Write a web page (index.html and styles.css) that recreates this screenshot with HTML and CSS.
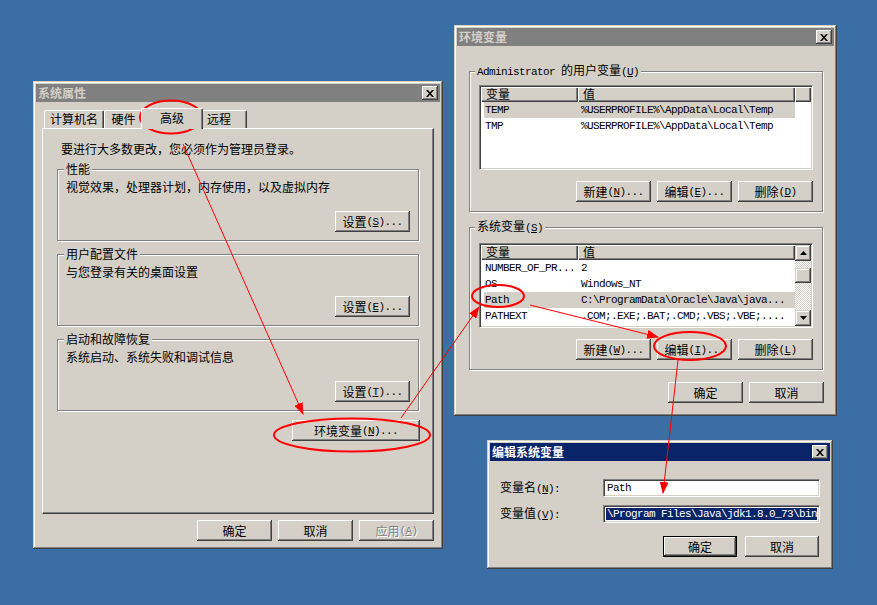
FILE: index.html
```html
<!DOCTYPE html>
<html lang="zh-CN">
<head>
<meta charset="utf-8">
<title>系统属性 - 环境变量</title>
<link rel="stylesheet" href="styles.css">
</head>
<body>
<div class="desktop">

  <section class="win win-sys">
    <header class="titlebar inactive">
      <span class="title">系统属性</span>
      <span class="close"><svg width="8" height="7" viewBox="0 0 8 7"><path d="M0 0h2l6 7H6zM6 0h2L2 7H0z"/></svg></span>
    </header>
    <div class="sys-body">
      <div class="tabs">
        <span class="tab t1">计算机名</span>
        <span class="tab t2">硬件</span>
        <span class="tab t3 sel">高级</span>
        <span class="tab t4">远程</span>
      </div>
      <div class="tabpanel">
        <p class="note">要进行大多数更改，您必须作为管理员登录。</p>
        <fieldset class="group sys-group">
          <legend>性能</legend>
          <p class="desc">视觉效果，处理器计划，内存使用，以及虚拟内存</p>
          <div class="row-end"><button class="btn">设置<span class="m">(<u>S</u>)...</span></button></div>
        </fieldset>
        <fieldset class="group sys-group">
          <legend>用户配置文件</legend>
          <p class="desc">与您登录有关的桌面设置</p>
          <div class="row-end"><button class="btn">设置<span class="m">(<u>E</u>)...</span></button></div>
        </fieldset>
        <fieldset class="group sys-group">
          <legend>启动和故障恢复</legend>
          <p class="desc">系统启动、系统失败和调试信息</p>
          <div class="row-end"><button class="btn">设置<span class="m">(<u>T</u>)...</span></button></div>
        </fieldset>
        <div class="row-end env-row"><button class="btn btn-wide">环境变量<span class="m">(<u>N</u>)...</span></button></div>
      </div>
      <div class="row-end dlg-buttons">
        <button class="btn">确定</button>
        <button class="btn">取消</button>
        <button class="btn" disabled>应用<span class="m">(<u>A</u>)</span></button>
      </div>
    </div>
  </section>

  <section class="win win-env">
    <header class="titlebar inactive">
      <span class="title">环境变量</span>
      <span class="close"><svg width="8" height="7" viewBox="0 0 8 7"><path d="M0 0h2l6 7H6zM6 0h2L2 7H0z"/></svg></span>
    </header>
    <div class="env-body">
      <fieldset class="group env-group">
        <legend><span class="m">Administrator </span>的用户变量<span class="m">(<u>U</u>)</span></legend>
        <div class="lv">
          <div class="lv-head"><span class="hc c1">变量</span><span class="hc c2">值</span><span class="hc c3"></span></div>
          <div class="lv-row sel"><span class="c1">TEMP</span><span class="c2">%USERPROFILE%\AppData\Local\Temp</span></div>
          <div class="lv-row"><span class="c1">TMP</span><span class="c2">%USERPROFILE%\AppData\Local\Temp</span></div>
        </div>
        <div class="row-end btn-row">
          <button class="btn">新建<span class="m">(<u>N</u>)...</span></button>
          <button class="btn">编辑<span class="m">(<u>E</u>)...</span></button>
          <button class="btn">删除<span class="m">(<u>D</u>)</span></button>
        </div>
      </fieldset>
      <fieldset class="group env-group sysvars">
        <legend>系统变量<span class="m">(<u>S</u>)</span></legend>
        <div class="lv lv-scroll">
          <div class="lv-main">
            <div class="lv-head"><span class="hc c1">变量</span><span class="hc c2">值</span></div>
            <div class="lv-row"><span class="c1">NUMBER_OF_PR...</span><span class="c2">2</span></div>
            <div class="lv-row"><span class="c1">OS</span><span class="c2">Windows_NT</span></div>
            <div class="lv-row sel"><span class="c1">Path</span><span class="c2">C:\ProgramData\Oracle\Java\java...</span></div>
            <div class="lv-row"><span class="c1">PATHEXT</span><span class="c2">.COM;.EXE;.BAT;.CMD;.VBS;.VBE;....</span></div>
          </div>
          <div class="vscroll">
            <span class="sb-btn"><svg width="7" height="4" viewBox="0 0 7 4"><path d="M3.5 0L7 4H0z"/></svg></span>
            <span class="sb-track"><span class="sb-thumb"></span></span>
            <span class="sb-btn"><svg width="7" height="4" viewBox="0 0 7 4"><path d="M0 0h7L3.5 4z"/></svg></span>
          </div>
        </div>
        <div class="row-end btn-row">
          <button class="btn">新建<span class="m">(<u>W</u>)...</span></button>
          <button class="btn">编辑<span class="m">(<u>I</u>)...</span></button>
          <button class="btn">删除<span class="m">(<u>L</u>)</span></button>
        </div>
      </fieldset>
      <div class="row-end env-buttons">
        <button class="btn">确定</button>
        <button class="btn">取消</button>
      </div>
    </div>
  </section>

  <section class="win win-edit">
    <header class="titlebar active">
      <span class="title">编辑系统变量</span>
      <span class="close"><svg width="8" height="7" viewBox="0 0 8 7"><path d="M0 0h2l6 7H6zM6 0h2L2 7H0z"/></svg></span>
    </header>
    <div class="edit-body">
      <div class="form">
        <label class="lbl">变量名<span class="m">(<u>N</u>):</span></label>
        <div class="field"><span class="m fv">Path</span></div>
        <label class="lbl">变量值<span class="m">(<u>V</u>):</span></label>
        <div class="field"><span class="m fv selected">\Program Files\Java\jdk1.8.0_73\bin</span></div>
      </div>
      <div class="row-end edit-buttons">
        <button class="btn btn-s default">确定</button>
        <button class="btn btn-s">取消</button>
      </div>
    </div>
  </section>

  <svg class="annot" width="877" height="605" viewBox="0 0 877 605">
    <defs>
      <marker id="ah" markerWidth="12" markerHeight="9" refX="11" refY="4.5" orient="auto" markerUnits="userSpaceOnUse">
        <path d="M0 0L12 4.5L0 9z" fill="#f00"/>
      </marker>
    </defs>
    <g fill="none" stroke="#f00">
      <ellipse cx="171" cy="117" rx="31" ry="16.5" stroke-width="2"/>
      <ellipse cx="352" cy="435" rx="78" ry="16.5" stroke-width="2"/>
      <ellipse cx="498" cy="296" rx="26" ry="11" stroke-width="2"/>
      <ellipse cx="690" cy="346" rx="36" ry="14" stroke-width="2"/>
      <line x1="183" y1="144" x2="303" y2="414" marker-end="url(#ah)"/>
      <line x1="401" y1="418" x2="479" y2="307" marker-end="url(#ah)"/>
      <line x1="530" y1="305" x2="658" y2="337" marker-end="url(#ah)"/>
      <line x1="678" y1="360" x2="663" y2="493" marker-end="url(#ah)"/>
    </g>
  </svg>

</div>
</body>
</html>
```

FILE: styles.css
```css
* { box-sizing: border-box; }

html, body { margin: 0; padding: 0; }

body {
  background: #3a6ea5;
  font: 12px/14px "Noto Sans CJK SC", sans-serif;
  color: #000;
}

p { margin: 0; }

.desktop {
  position: relative;
  width: 877px;
  height: 605px;
  overflow: hidden;
}

/* latin text in the dialogs: fixed 6px cells like the system font */
.m {
  font-family: "Liberation Mono", monospace;
  font-size: 11px;
  letter-spacing: -0.6px;
}

u { text-decoration: underline; text-underline-offset: 1px; }

/* ---------- windows ---------- */
.win {
  position: absolute;
  background: #d4d0c8;
  padding: 3px;
  display: flex;
  flex-direction: column;
  box-shadow:
    inset -1px -1px #404040,
    inset 1px 1px #d4d0c8,
    inset -2px -2px #808080,
    inset 2px 2px #fff;
}

.win-sys  { left: 33px;  top: 81px;  width: 410px; height: 468px; }
.win-env  { left: 454px; top: 25px;  width: 383px; height: 391px; }
.win-edit { left: 487px; top: 440px; width: 346px; height: 129px; }

.titlebar {
  flex: none;
  height: 18px;
  display: flex;
  align-items: center;
  justify-content: space-between;
  padding: 0 2px 0 2px;
  font-weight: bold;
}

.titlebar.inactive { background: #808080; color: #d4d0c8; }
.titlebar.active   { background: #0a246a; color: #fff; }

.close {
  width: 16px;
  height: 14px;
  display: flex;
  align-items: center;
  justify-content: center;
  background: #d4d0c8;
  box-shadow:
    inset -1px -1px #404040,
    inset 1px 1px #fff,
    inset -2px -2px #808080;
}

/* ---------- buttons ---------- */
.btn {
  width: 75px;
  height: 21px;
  padding: 0;
  border: 0;
  background: #d4d0c8;
  font: inherit;
  color: #000;
  display: inline-flex;
  align-items: center;
  justify-content: center;
  white-space: nowrap;
  box-shadow:
    inset -1px -1px #404040,
    inset 1px 1px #fff,
    inset -2px -2px #808080,
    inset 2px 2px #d4d0c8;
}

.btn:disabled { color: #808080; text-shadow: 1px 1px #fff; }

.btn-wide { width: 128px; }
.btn-s { width: 74px; }

.btn.default {
  box-shadow:
    inset 0 0 0 1px #000,
    inset -2px -2px #404040,
    inset 2px 2px #fff,
    inset -3px -3px #808080;
}

.row-end {
  display: flex;
  justify-content: flex-end;
  gap: 6px;
}

/* ---------- group boxes ---------- */
.group {
  margin: 0;
  min-width: 0;
  border: 1px solid #808080;
  box-shadow: inset 1px 1px #fff, 1px 1px #fff;
}

.group legend {
  padding: 0 2px;
  background: #d4d0c8;
  line-height: 14px;
}

/* ---------- 系统属性 ---------- */
.sys-body {
  flex: 1;
  display: flex;
  flex-direction: column;
  padding: 6px 6px 5px;
}

.tabs {
  display: flex;
  align-items: flex-end;
  height: 20px;
  padding-left: 2px;
}

.tab {
  position: relative;
  height: 18px;
  padding-top: 1px;
  text-align: center;
  background: #d4d0c8;
  border-left: 1px solid #fff;
  border-top: 1px solid #fff;
  border-right: 1px solid #404040;
  border-radius: 2px 2px 0 0;
  box-shadow: inset -1px 0 #808080;
}

.t1 { width: 60px; }
.t2 { width: 39px; }
.t3 { width: 62px; }
.t4 { width: 46px; padding-right: 10px; }

.tab.sel {
  z-index: 1;
  height: 21px;
  margin: 0 -2px -1px;
  padding-top: 2px;
}

.tabpanel {
  flex: 1;
  padding: 13px 14px 0;
  border-top: 1px solid #fff;
  border-left: 1px solid #fff;
  border-right: 1px solid #404040;
  border-bottom: 1px solid #404040;
  box-shadow: inset -1px -1px #808080;
}

.note { margin-left: 4px; }

.sys-group {
  margin-top: 6px;
  padding: 4px 8px 8px 6px;
}

.desc { margin-left: 2px; margin-bottom: 17px; }

.env-row { margin-top: 9px; margin-right: -1px; }

.dlg-buttons { margin-top: 6px; }

/* ---------- 环境变量 ---------- */
.env-body {
  flex: 1;
  padding: 17px 11px 0 12px;
}

.env-group { padding: 6px 9px 9px 9px; }
.env-group legend { margin-left: -4px; }

.env-group.sysvars { margin-top: 7px; padding-top: 8px; }

.lv {
  height: 85px;
  padding: 1px;
  background: #fff;
  border: 1px solid;
  border-color: #808080 #fff #fff #808080;
  box-shadow: inset 1px 1px #404040, inset -1px -1px #d4d0c8;
  overflow: hidden;
}

.lv-head { display: flex; height: 15px; }

.hc {
  height: 15px;
  padding-left: 5px;
  line-height: 14px;
  background: #d4d0c8;
  box-shadow:
    inset 1px 1px #fff,
    inset -1px -1px #404040,
    inset -2px -2px #808080;
}

.hc.c1 { width: 97px; }
.hc.c2 { width: 217px; }
.hc.c3 { flex: 1; }

.lv-row {
  display: flex;
  width: 311px;
  height: 16px;
  margin-left: 3px;
  font-family: "Liberation Mono", monospace;
  font-size: 11px;
  letter-spacing: -0.6px;
  line-height: 16px;
  white-space: nowrap;
}

.lv-row.sel { background: #d4d0c8; }

.lv-row .c1 { width: 94px; padding-left: 1px; }
.lv-row .c2 { padding-left: 3px; }

.lv-scroll { display: flex; }
.lv-main { flex: 1; min-width: 0; }

.vscroll {
  width: 16px;
  display: flex;
  flex-direction: column;
  background: repeating-conic-gradient(#fff 0 25%, #d4d0c8 0 50%) 0 0 / 2px 2px;
}

.sb-btn, .sb-thumb {
  display: flex;
  align-items: center;
  justify-content: center;
  width: 16px;
  height: 16px;
  background: #d4d0c8;
  box-shadow:
    inset -1px -1px #404040,
    inset 1px 1px #d4d0c8,
    inset -2px -2px #808080,
    inset 2px 2px #fff;
}

.sb-track { flex: 1; }
.sb-thumb { margin-top: 7px; height: 15px; }

.btn-row { margin-top: 11px; }

.env-buttons { margin-top: 12px; margin-right: -1px; }

/* ---------- 编辑系统变量 ---------- */
.edit-body {
  flex: 1;
  padding: 18px 10px 0;
}

.form {
  display: grid;
  grid-template-columns: 103px 217px;
  row-gap: 8px;
  align-items: center;
}

.field {
  height: 18px;
  padding: 2px;
  background: #fff;
  border: 1px solid;
  border-color: #808080 #fff #fff #808080;
  box-shadow: inset 1px 1px #404040, inset -1px -1px #d4d0c8;
  overflow: hidden;
  white-space: nowrap;
  display: flex;
}

.fv { line-height: 12px; padding-left: 1px; }

.fv.selected {
  flex: none;
  background: #0a246a;
  color: #fff;
}

.edit-buttons { margin-top: 13px; gap: 8px; padding-right: 1px; }

/* ---------- annotations ---------- */
.annot {
  position: absolute;
  left: 0;
  top: 0;
  pointer-events: none;
}
```
